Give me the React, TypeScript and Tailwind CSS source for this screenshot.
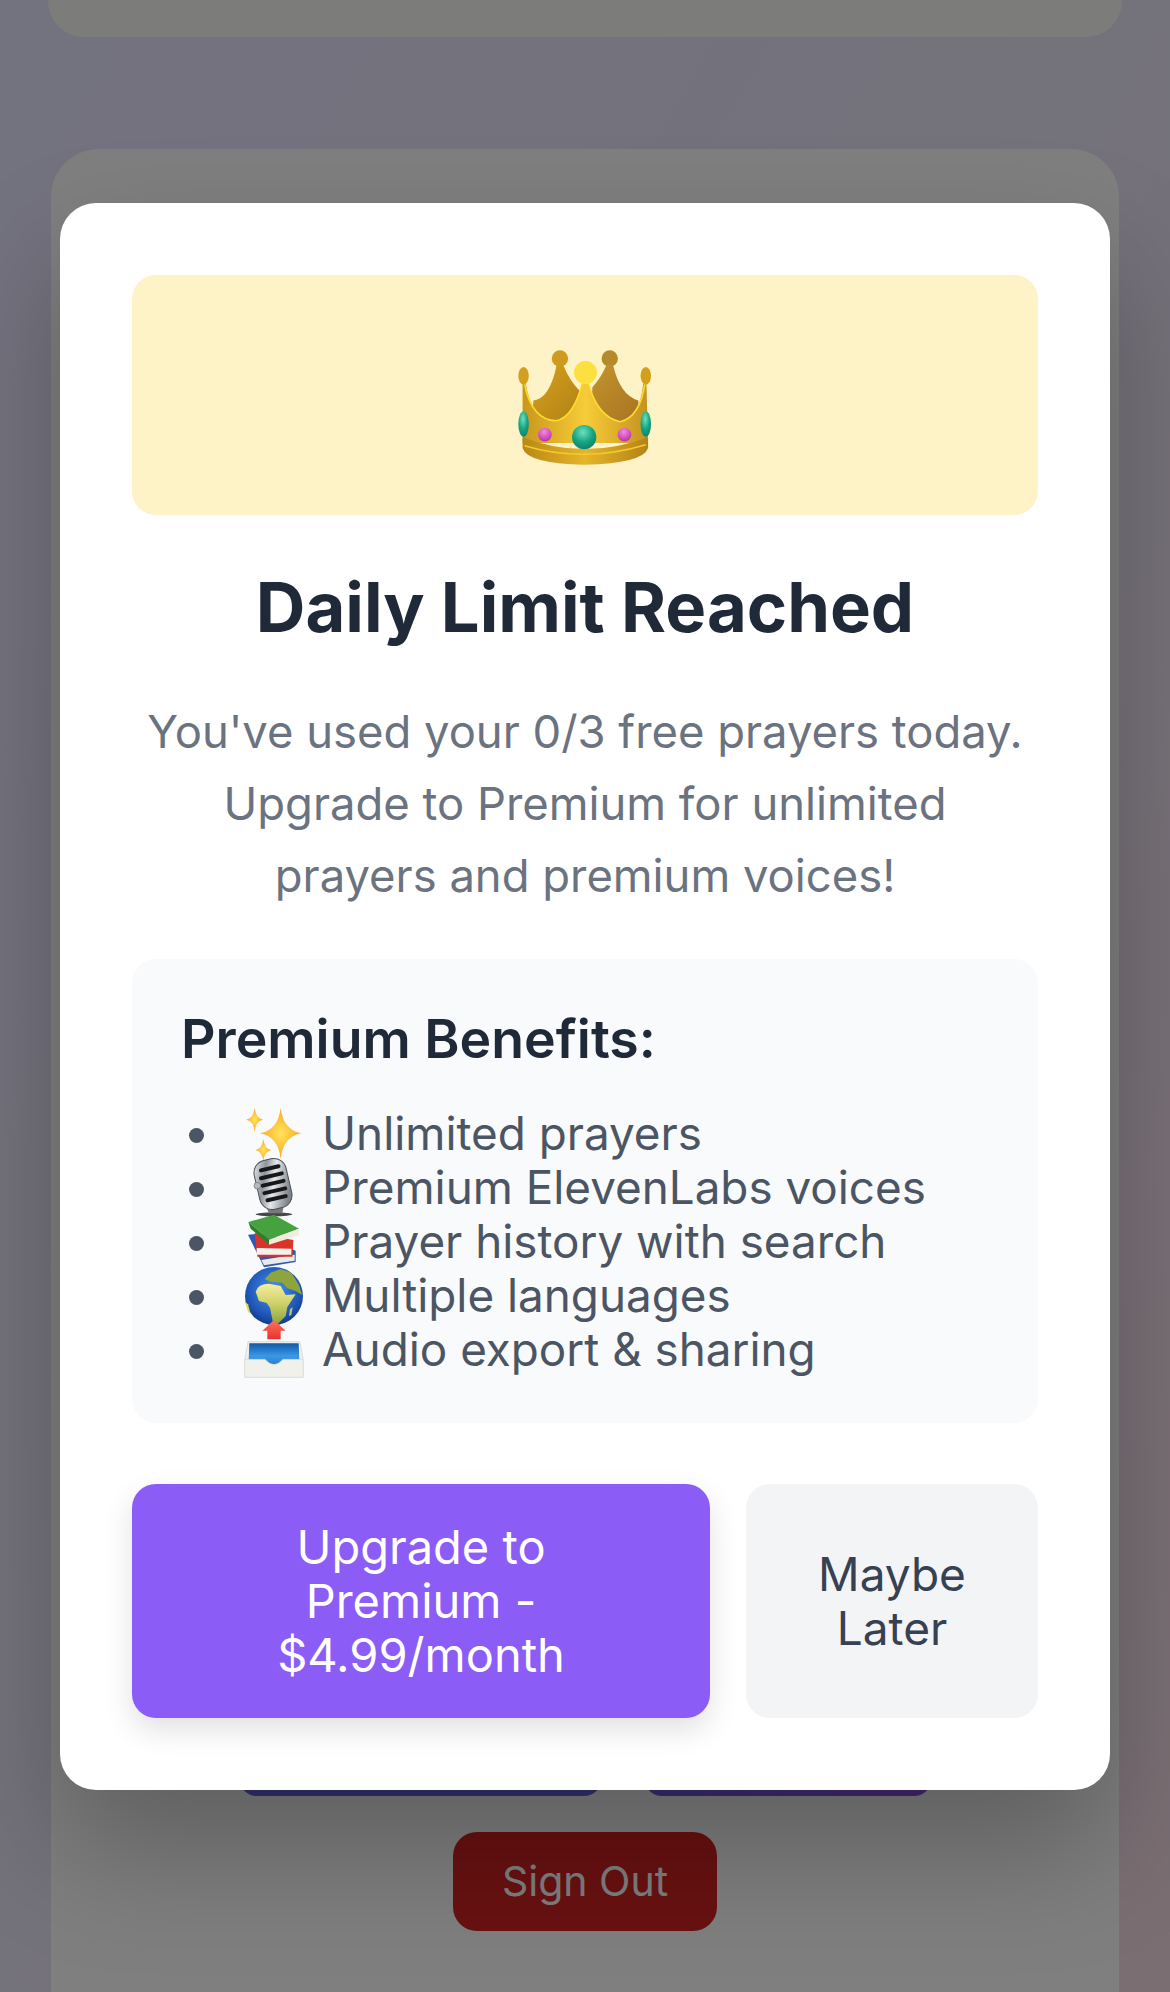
const font = { fontFamily: 'Inter, "Noto Sans", sans-serif' }

function Crown() {
  return (
    <svg width="136" height="118" viewBox="105 80 415 360" className="mt-[24px]">
      <defs>
        <linearGradient id="crownBody" x1="0" y1="0" x2="1" y2="0">
          <stop offset="0" stopColor="#c9961c" />
          <stop offset="0.5" stopColor="#f7cc38" />
          <stop offset="1" stopColor="#c4921f" />
        </linearGradient>
        <linearGradient id="crownBackL" x1="0" y1="0" x2="1" y2="1">
          <stop offset="0" stopColor="#d6a31f" />
          <stop offset="1" stopColor="#b07f14" />
        </linearGradient>
        <linearGradient id="crownBackR" x1="0" y1="0" x2="1" y2="1">
          <stop offset="0" stopColor="#c2952c" />
          <stop offset="1" stopColor="#a97222" />
        </linearGradient>
        <linearGradient id="crownBase" x1="0" y1="0" x2="1" y2="0">
          <stop offset="0" stopColor="#b98815" />
          <stop offset="0.5" stopColor="#e6b52a" />
          <stop offset="1" stopColor="#b28318" />
        </linearGradient>
        <radialGradient id="gemGreen" cx="0.45" cy="0.3" r="0.75">
          <stop offset="0" stopColor="#6fe0bc" />
          <stop offset="0.55" stopColor="#14a583" />
          <stop offset="1" stopColor="#0d7f68" />
        </radialGradient>
        <radialGradient id="gemPink" cx="0.45" cy="0.3" r="0.75">
          <stop offset="0" stopColor="#f28adf" />
          <stop offset="1" stopColor="#b92ca4" />
        </radialGradient>
      </defs>
      {/* back points */}
      <circle cx="236" cy="112" r="25" fill="#cf9a1f" />
      <circle cx="388" cy="112" r="25" fill="#b48a2a" />
      <path d="M226 132 L246 132 Q265 180 300 215 L300 310 L150 310 L155 240 Q205 235 226 132 Z" fill="url(#crownBackL)" />
      <path d="M378 132 L398 132 Q420 225 475 240 L480 310 L330 310 L335 200 Q362 170 378 132 Z" fill="url(#crownBackR)" />
      {/* front */}
      <path d="M122 190 L132 190 Q150 300 225 302 Q278 290 305 185 L322 185 Q350 290 420 305 Q480 290 490 190 L500 190 L505 370 L122 370 Z" fill="url(#crownBody)" />
      <path d="M128 190 Q150 300 225 302 Q278 290 305 185" fill="none" stroke="#fbdc2e" strokeWidth="5" />
      <path d="M322 185 Q350 290 420 305 Q480 290 495 190" fill="none" stroke="#fbdc2e" strokeWidth="5" />
      <ellipse cx="125" cy="165" rx="16" ry="27" fill="#d3a01e" />
      <ellipse cx="498" cy="165" rx="16" ry="27" fill="#d3a01e" />
      <circle cx="314" cy="155" r="35" fill="#fbe03f" />
      {/* base */}
      <path d="M122 352 Q310 425 505 352 L505 385 Q490 432 310 436 Q135 432 122 385 Z" fill="url(#crownBase)" />
      <path d="M128 378 Q310 432 498 375" fill="none" stroke="#f6c92c" strokeWidth="5" />
      {/* gems */}
      <ellipse cx="125" cy="312" rx="16" ry="39" fill="url(#gemGreen)" />
      <ellipse cx="498" cy="312" rx="16" ry="39" fill="url(#gemGreen)" />
      <circle cx="310" cy="352" r="37" fill="url(#gemGreen)" />
      <circle cx="190" cy="344" r="21" fill="url(#gemPink)" />
      <circle cx="433" cy="344" r="21" fill="url(#gemPink)" />
    </svg>
  )
}

function Star({ x, y, rx, ry }: { x: number; y: number; rx: number; ry: number }) {
  const k = 0.13
  const a = rx * k
  const b = ry * k
  return (
    <path
      d={`M${x} ${y - ry} Q${x + a} ${y - b} ${x + rx} ${y} Q${x + a} ${y + b} ${x} ${y + ry} Q${x - a} ${y + b} ${x - rx} ${y} Q${x - a} ${y - b} ${x} ${y - ry} Z`}
      fill="url(#sparkFill)"
    />
  )
}

function Sparkles() {
  return (
    <svg width="60" height="60" viewBox="220 40 180 180" className="overflow-visible">
      <defs>
        <radialGradient id="sparkFill" cx="0.5" cy="0.5" r="0.5">
          <stop offset="0" stopColor="#ffe45c" />
          <stop offset="1" stopColor="#fca61f" />
        </radialGradient>
      </defs>
      <Star x={330} y={128} rx={62} ry={76} />
      <Star x={252} y={87} rx={25} ry={36} />
      <Star x={278} y={178} rx={24} ry={33} />
    </svg>
  )
}

function Mic() {
  return (
    <svg width="60" height="60" viewBox="220 202 180 180" className="overflow-visible">
      <defs>
        <linearGradient id="chrome" x1="0" y1="0" x2="1" y2="0.6">
          <stop offset="0" stopColor="#f1f4f7" />
          <stop offset="0.35" stopColor="#8f959c" />
          <stop offset="0.6" stopColor="#e6e9ec" />
          <stop offset="1" stopColor="#7f858c" />
        </linearGradient>
      </defs>
      <ellipse cx="310" cy="371" rx="55" ry="6" fill="#46474a" />
      <path d="M285 345 L340 340 L335 368 L295 368 Z" fill="#77797d" />
      <g transform="rotate(-13 307 280)">
        <rect x="258" y="205" width="98" height="150" rx="38" fill="url(#chrome)" stroke="#4d4f54" strokeWidth="3" />
        <rect x="275" y="226" width="66" height="12" rx="6" fill="#18181a" />
        <rect x="270" y="249" width="76" height="12" rx="6" fill="#18181a" />
        <rect x="270" y="272" width="76" height="12" rx="6" fill="#18181a" />
        <rect x="270" y="295" width="76" height="12" rx="6" fill="#18181a" />
        <rect x="274" y="318" width="68" height="12" rx="6" fill="#18181a" />
      </g>
      <circle cx="260" cy="285" r="10" fill="#b6bac0" stroke="#63666b" strokeWidth="2" />
    </svg>
  )
}

function Books() {
  return (
    <svg width="60" height="60" viewBox="220 362 180 180" className="overflow-visible">
      <path d="M232 430 L258 428 L375 478 L375 512 L280 528 Z" fill="#2f58b4" />
      <path d="M272 506 L372 490 L372 508 L280 522 Z" fill="#e9ebe8" />
      <path d="M252 425 L368 446 L365 496 L260 496 Z" fill="#dc3329" />
      <path d="M258 470 L362 472 L362 490 L258 490 Z" fill="#f3f1ea" />
      <path d="M233 392 L310 370 L385 412 L295 445 Z" fill="#46a23f" />
      <path d="M233 392 L295 445 L295 460 L240 412 Z" fill="#2f7d2e" />
      <path d="M295 445 L385 412 L385 432 L295 460 Z" fill="#eeeee0" />
    </svg>
  )
}

function Globe() {
  return (
    <svg width="60" height="60" viewBox="220 525 180 180" className="overflow-visible">
      <defs>
        <radialGradient id="sea" cx="0.5" cy="0.4" r="0.62">
          <stop offset="0" stopColor="#4a96ea" />
          <stop offset="0.72" stopColor="#1f56b8" />
          <stop offset="1" stopColor="#0f3a86" />
        </radialGradient>
        <linearGradient id="land" x1="0" y1="0" x2="0" y2="1">
          <stop offset="0" stopColor="#f4efa0" />
          <stop offset="0.5" stopColor="#cfd068" />
          <stop offset="1" stopColor="#8aa440" />
        </linearGradient>
      </defs>
      <circle cx="310" cy="615" r="87" fill="url(#sea)" />
      <path d="M255 602 Q262 578 295 578 L330 585 L345 612 L375 610 L350 648 L345 675 L322 698 L306 690 L298 650 L288 636 L265 630 Z" fill="url(#land)" />
      <path d="M282 565 L300 545 L330 534 L362 545 L385 582 L394 612 L375 600 L350 592 L335 575 L300 572 Z" fill="#8ea53e" />
      <path d="M223 632 L232 640 L240 668 L232 662 Z" fill="#e2d65e" />
      <path d="M358 655 L366 648 L362 672 L355 675 Z" fill="#c7c65c" />
    </svg>
  )
}

function Outbox() {
  return (
    <svg width="60" height="60" viewBox="220 690 180 180" className="overflow-visible">
      <defs>
        <linearGradient id="arrowFill" x1="0" y1="0" x2="0" y2="1">
          <stop offset="0" stopColor="#ff7163" />
          <stop offset="1" stopColor="#e7322b" />
        </linearGradient>
        <linearGradient id="wellFill" x1="0" y1="0" x2="0" y2="1">
          <stop offset="0" stopColor="#0f5aa6" />
          <stop offset="0.6" stopColor="#3a98e8" />
          <stop offset="1" stopColor="#2a7fd0" />
        </linearGradient>
      </defs>
      <path d="M310 690 L345 722 L330 722 L330 748 L290 748 L290 722 L275 722 Z" fill="url(#arrowFill)" />
      <path d="M232 755 L388 755 L398 812 L398 862 L222 862 L222 812 Z" fill="#f1f1ec" stroke="#cfcfca" strokeWidth="2" />
      <path d="M236 760 L384 760 L386 808 L338 808 Q310 838 282 808 L234 808 Z" fill="url(#wellFill)" />
      <path d="M222 808 L284 808 Q310 840 336 808 L398 808" fill="none" stroke="#d5d5d0" strokeWidth="2" />
    </svg>
  )
}

const benefits = [
  { icon: <Sparkles />, text: 'Unlimited prayers' },
  { icon: <Mic />, text: 'Premium ElevenLabs voices' },
  { icon: <Books />, text: 'Prayer history with search' },
  { icon: <Globe />, text: 'Multiple languages' },
  { icon: <Outbox />, text: 'Audio export & sharing' },
]

export default function App() {
  return (
    <div style={font} className="relative w-[1170px] h-[1992px] overflow-hidden bg-gradient-to-br from-[#e6e6ff] via-[#e8e4f6] to-[#f6dde6]">
      {/* page behind the overlay */}
      <div className="flex flex-col items-center h-full">
        <div className="w-[1074px] h-[37px] shrink-0 rounded-b-[36px] bg-[#f8faf6]" />
        <div className="mt-[112px] w-[1068px] flex-1 rounded-t-[48px] bg-white flex flex-col items-center justify-end pb-[61px]">
          <div className="flex gap-[42px]">
            <div className="w-[363px] h-[40px] rounded-[18px] bg-[#6464e0]" />
            <div className="w-[288px] h-[40px] rounded-[18px] bg-gradient-to-r from-[#7058e0] to-[#8a4ee4]" />
          </div>
          <button className="mt-[36px] w-[264px] h-[99px] rounded-[24px] bg-[#d32222] text-white text-[41px]">
            Sign Out
          </button>
        </div>
      </div>

      {/* overlay */}
      <div className="absolute inset-0 bg-black/50 flex justify-center pt-[203px]">
        <div className="w-[1050px] h-[1587px] rounded-[36px] bg-white p-[72px] shadow-[0_60px_120px_rgba(0,0,0,0.25)]">
          <div className="h-[240px] rounded-[24px] bg-[#fef3c7] flex items-center justify-center">
            <Crown />
          </div>

          <h2 className="mt-[52px] text-center text-[68.7px] leading-[80px] font-bold text-[#1f2937]">
            Daily Limit Reached
          </h2>

          <p className="mt-[49px] px-[12px] text-center text-[45.4px] leading-[72px] text-[#6b7280]">
            You've used your 0/3 free prayers today. Upgrade to Premium for unlimited prayers and premium voices!
          </p>

          <div className="mt-[47px] h-[464px] rounded-[24px] bg-[#f9fafb] px-[49px] pt-[50px]">
            <h3 className="text-[53.6px] leading-[60px] font-semibold text-[#1f2937]">Premium Benefits:</h3>
            <ul className="mt-[38px] list-disc pl-[44px] text-[45.8px] leading-[54px] text-[#4b5563]">
              {benefits.map((b) => (
                <li key={b.text} className="pl-[18px] marker:text-[#4b5563]">
                  <span className="inline-flex items-center gap-[17px] align-top">
                    <span className="w-[62px] h-[54px] flex items-center justify-center shrink-0">{b.icon}</span>
                    <span>{b.text}</span>
                  </span>
                </li>
              ))}
            </ul>
          </div>

          <div className="mt-[61px] flex gap-[36px] h-[234px]">
            <button className="w-[578px] shrink-0 rounded-[24px] bg-[#8b5cf6] px-[96px] text-[47px] leading-[54px] font-normal text-white shadow-[0_12px_30px_rgba(0,0,0,0.12)]">
              Upgrade to Premium - $4.99/month
            </button>
            <button className="flex-1 rounded-[24px] bg-[#f3f4f6] px-[48px] text-[46px] leading-[54px] font-normal text-[#374151]">
              Maybe Later
            </button>
          </div>
        </div>
      </div>
    </div>
  )
}
